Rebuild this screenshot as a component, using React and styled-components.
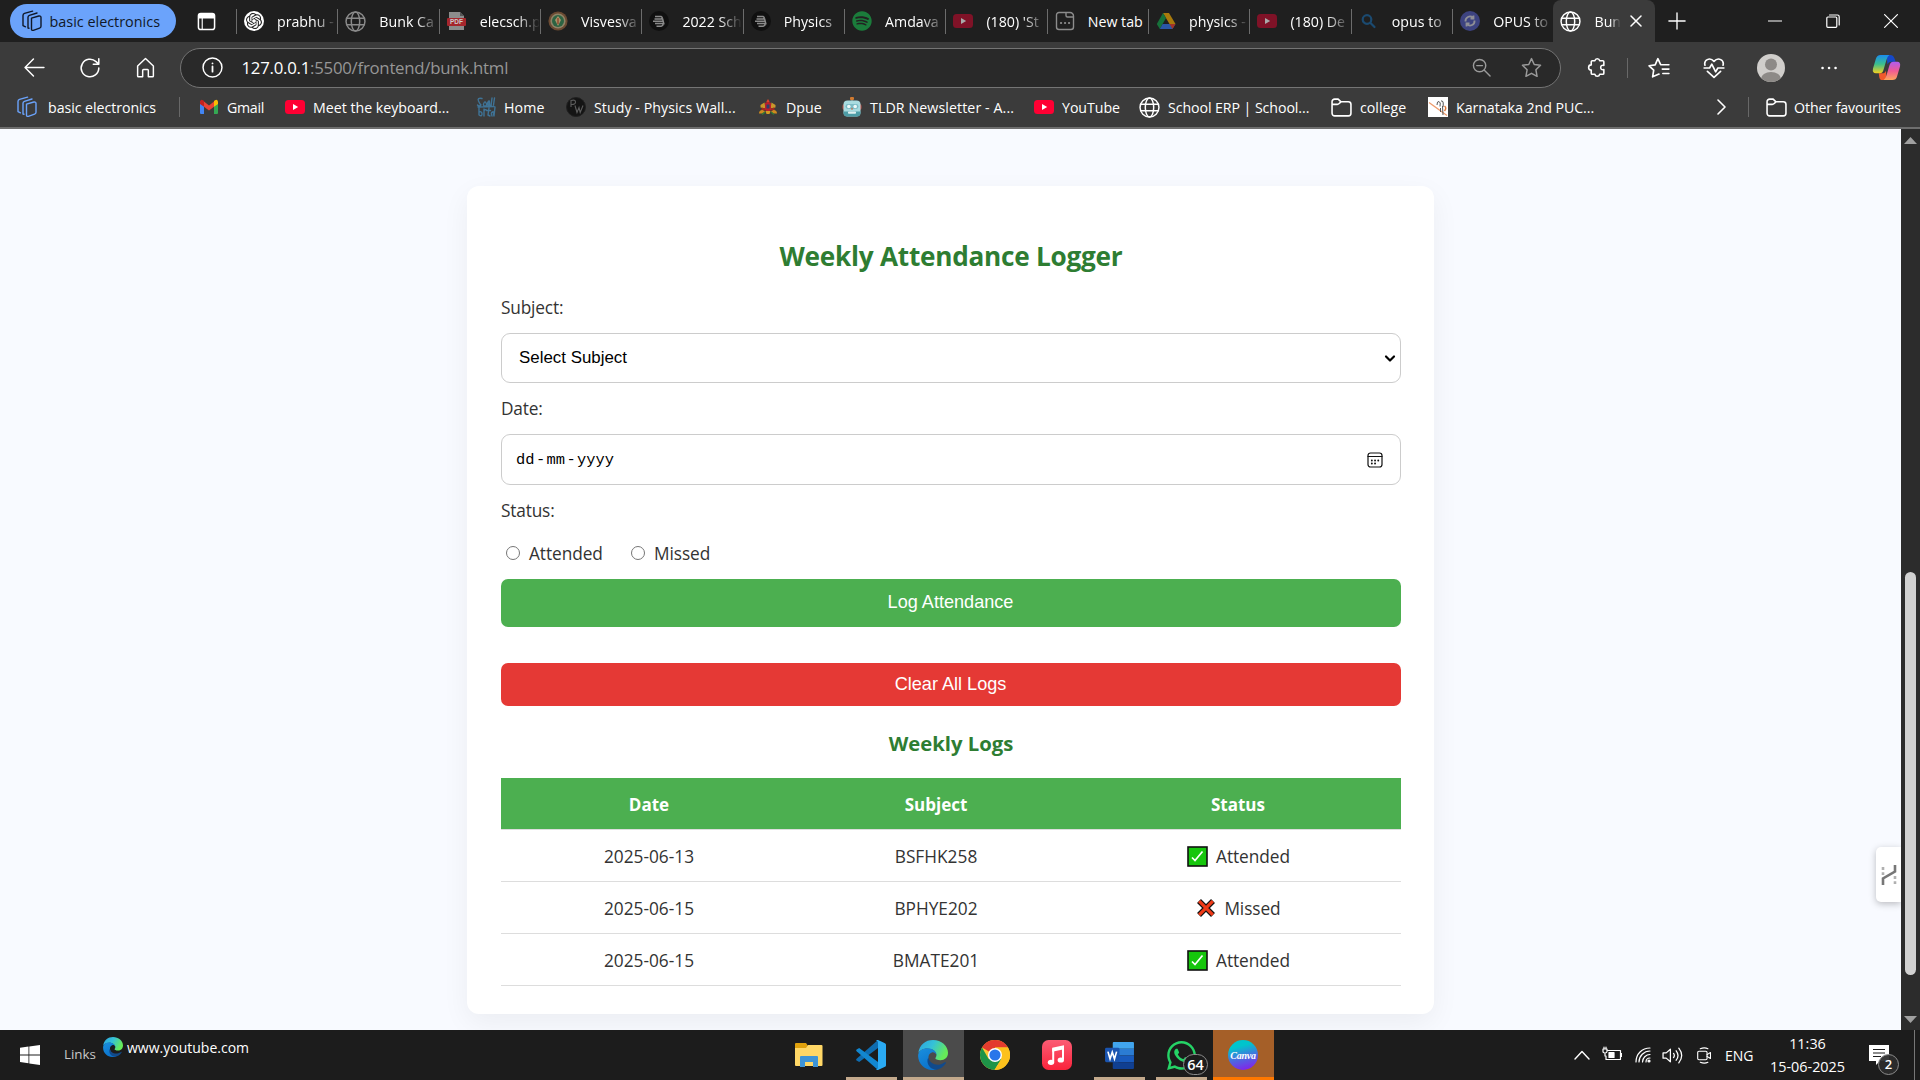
import React from "react";
import styled, { createGlobalStyle, css } from "styled-components";
import { FaSpotify, FaWhatsapp } from "react-icons/fa";
import { SiOpenai } from "react-icons/si";

const ui = `"Open Sans", "Noto Sans", sans-serif`;
const arial = `"Liberation Sans", Arial, sans-serif`;

const Global = createGlobalStyle`
  *, *::before, *::after { box-sizing: border-box; }
  body { margin: 0; overflow: hidden; background: #1c1c1c; font-family: ${ui}; }
  svg { display: block; flex: none; }
`;

const Screen = styled.div`
  width: 1920px;
  height: 1080px;
  display: flex;
  flex-direction: column;
  overflow: hidden;
`;

/* ---------- icons ---------- */
const Line = ({ s = 20, w = 1.5, c = "#fff", children, vb = "0 0 20 20", h }) => (
  <svg width={s} height={h || s} viewBox={vb} fill="none" stroke={c} strokeWidth={w} strokeLinecap="round" strokeLinejoin="round">
    {children}
  </svg>
);
const Globe = ({ c = "#fff" }) => (
  <Line s={21} c={c} w={1.4}>
    <circle cx="10" cy="10" r="9" />
    <ellipse cx="10" cy="10" rx="4" ry="9" />
    <path d="M1.8 7h16.4M1.8 13h16.4" />
  </Line>
);
const Pages = ({ c }) => (
  <Line s={22} c={c} w={1.4} vb="0 0 22 22">
    <path d="M10.5 8.2 17.8 6q2.2-.4 2.2 1.6v8.6q0 1.4-1.4 1.9l-6.3 2.2q-1.8.5-1.8-1.4z" />
    <path d="M8 18.2 7 18V7.3q0-1.5 1.4-2L16 3" />
    <path d="M4.5 16.8 2 15.6V5.6Q2 4 3.5 3.4L11.6 1.1" />
  </Line>
);
const YouTube = ({ dim }) => (
  <svg width="20" height="20" viewBox="0 0 20 20">
    <rect y="3" width="20" height="14" rx="3.5" fill={dim ? "#7f1227" : "#ff0033"} />
    <path d="m8 7 5.2 3L8 13z" fill={dim ? "#aaa" : "#fff"} />
  </svg>
);
const PdfIcon = () => (
  <svg width="20" height="20" viewBox="0 0 20 20">
    <path d="M2 1h11l4 4v14H2z" fill="#8c8c8c" />
    <path d="M13 1v4h4z" fill="#555" />
    <rect x="0" y="7" width="19" height="8" rx="1" fill="#a5262c" />
    <text x="9.5" y="13.4" fontSize="6.5" fontWeight="700" fill="#ccc" textAnchor="middle" fontFamily="Liberation Sans, sans-serif">PDF</text>
  </svg>
);
const Crest = () => (
  <svg width="20" height="20" viewBox="0 0 20 20">
    <circle cx="10" cy="10" r="9.6" fill="#6b4a32" />
    <circle cx="10" cy="10" r="7.6" fill="#8e8367" />
    <circle cx="10" cy="10" r="6" fill="#2c6342" />
    <path d="M10 5 13 9 10 15 7 9z" fill="#a8946a" />
    <path d="M10 7v6" stroke="#8a3a22" strokeWidth="1.2" />
  </svg>
);
const Bold3 = () => (
  <svg width="20" height="20" viewBox="0 0 20 20">
    <circle cx="10" cy="10" r="10" fill="#101010" />
    <path d="M6 5.5h6q2.5 1.2 0 2.6H5.5M4 10.300h9.500M6 12.500h7.500q1.500 2-1.500 2.800H7.500M13.500 7.500l1.500 6" stroke="#8a8a8a" strokeWidth="1.5" fill="none" />
  </svg>
);
const Disc = styled.span`
  display: grid;
  place-items: center;
  flex: none;
  width: 20px;
  height: 20px;
  border-radius: 50%;
  background: ${(p) => p.$bg};
  color: ${(p) => p.$fg};
  font-size: ${(p) => p.$size || 16}px;
`;
const NewTabIcon = () => (
  <Line c="#8c8c8c" w={1.4}>
    <path d="M11 1.5H4A2.5 2.5 0 0 0 1.5 4v12A2.5 2.5 0 0 0 4 18.5h12a2.5 2.5 0 0 0 2.5-2.5V6H12.500a1.500 1.500 0 0 1-1.500-1.500zM11 1.500h4a3.500 3.500 0 0 1 3.500 3.500v1" />
    <path d="M6 12h.1M10 12h.1M14 12h.1" strokeWidth="2.2" />
  </Line>
);
const Drive = () => (
  <svg width="20" height="20" viewBox="0 0 20 20">
    <path d="M7 2h6l6.500 11h-6z" fill="#a87a0c" />
    <path d="M7 2 .8 13l3 5 6.200-11z" fill="#16713a" />
    <path d="M6.600 13h12.900l-3 5H3.800z" fill="#2a57a5" />
    <path d="M13.500 13h6l-3 5z" fill="#a23227" />
  </svg>
);
const Gmail = () => (
  <svg width="20" height="20" viewBox="0 0 20 20">
    <path d="M1 4.500h4V17H2q-1 0-1-1z" fill="#4285f4" />
    <path d="M15 4.500h4V16q0 1-1 1h-3z" fill="#34a853" />
    <path d="M5 4.500 10 8.500l5-4v5.300L10 13.500 5 9.800z" fill="#ea4335" />
    <path d="M1 4.800Q1.500 2 4 3.200L5 4v5.800L1 7z" fill="#c5221f" />
    <path d="M19 4.800Q18.500 2 16 3.200L15 4v5.800L19 7z" fill="#fbbc04" />
  </svg>
);
const HomeScribble = () => (
  <Line c="#3f7396" w={1.4}>
    <path d="M6 1.500Q1 .5 2.500 4T5 8q-2 2-3.500 0M8.500 5q-2.500 4 .5 4t.5-4M12.500 4q-2.500 4 0 4.500l.8-4.500.5 5M16 1l-1 8M18.500 1l-1 7M3 11v7q3 2 3-1t-3-2M8 12v7M8 14q1-2 2.500-1M13 11l-1 7 2 1M10.500 13.500h4M16 19q-1.500-3 .5-4t1 3M19 10l-1 9M2 10l16-.5" />
  </Line>
);
const Pw = () => (
  <svg width="20" height="20" viewBox="0 0 20 20">
    <circle cx="10" cy="10" r="9.500" fill="#141414" stroke="#202020" />
    <path d="M5 10V3.500q4.500-1.200 4.500 1.500T5 7.500M9 8.500l2 7 2-5 1.200 5 2.800-7" stroke="#5e5e5e" strokeWidth="1.1" fill="none" />
  </svg>
);
const Emblem = () => (
  <svg width="20" height="20" viewBox="0 0 20 20">
    <path d="M10 2l1.600 2.500L10 6 8.400 4.500z" fill="#d8432c" />
    <path d="M2.500 8l4-2.500 1 6-5-1zM17.500 8l-4-2.500-1 6 5-1z" fill="#c9972a" />
    <path d="M7 6q3-2 6 0v7l-3 2-3-2z" fill="#b9202c" />
    <path d="M8.500 7.500h3v4h-3z" fill="#2c3f6e" />
    <path d="M4 10.500l3 1v2H3zM16 10.500l-3 1v2h4z" fill="#a32a20" />
    <path d="M1 16.500q0-3.500 3.500-3.500l2.500 1.500-2 2zM19 16.500q0-3.500-3.500-3.500L13 14.500l2 2z" fill="#cf8a1e" />
    <path d="M4 17.500l3-2.500M16 17.500l-3-2.500" stroke="#2f7a34" strokeWidth="1.500" />
    <path d="M7.500 14h5l-1 3h-3z" fill="#d19b22" />
  </svg>
);
const Robot = () => (
  <svg width="20" height="20" viewBox="0 0 20 20">
    <rect x="8" y="0" width="4" height="3" rx="1" fill="#d07a30" />
    <path d="M10 3v2" stroke="#a98" />
    <rect x="0.500" y="7" width="19" height="6" rx="2" fill="#c25148" />
    <rect x="1.500" y="3.500" width="17" height="16" rx="4" fill="#a9dbe0" />
    <path d="M1.500 14.500h17v1q0 4-4 4h-9q-4 0-4-4z" fill="#4d9ca6" />
    <rect x="3.500" y="7" width="13" height="5" rx="2.400" fill="#7dbcc6" />
    <circle cx="6.800" cy="9.500" r="1.800" fill="#eef8f8" />
    <circle cx="13.200" cy="9.500" r="1.800" fill="#eef8f8" />
    <path d="M10 10.500l1 2H9z" fill="#d3572b" />
    <rect x="6" y="14.500" width="8" height="2.200" rx=".8" fill="#dff0f1" />
  </svg>
);
const Folder = () => (
  <Line s={21} w={1.5}>
    <path d="M1 15.500V4.500A2.500 2.500 0 0 1 3.500 2h3.300l2.700 2.600h7A2.500 2.500 0 0 1 19 7v8.500a2.500 2.500 0 0 1-2.500 2.500h-13A2.500 2.500 0 0 1 1 15.500zM1 7h5q1 0 1.800-.8L9.500 4.600" />
  </Line>
);
const Heron = () => (
  <svg width="20" height="20" viewBox="0 0 20 20">
    <rect width="20" height="20" fill="#fff" />
    <path d="M1 5.500l18 13" stroke="#ee9a6a" strokeWidth="1.300" />
    <path d="M9 8q0-4 2-3.500t1 5M13 4q3-1 2 6M14.500 9l.5 9M12.500 11v4" stroke="#555" fill="none" />
    <path d="M16.500 9q2.500 2 0 5" stroke="#e07a3c" strokeWidth="1.500" fill="none" />
  </svg>
);
const EdgeLogo = ({ s, id }) => (
  <svg width={s} height={s} viewBox="0 0 32 32">
    <defs>
      <linearGradient id={id + "a"} x1="0" y1="0" x2="1" y2=".4">
        <stop offset="0" stopColor="#2ba3e0" />
        <stop offset=".5" stopColor="#35c1d8" />
        <stop offset="1" stopColor="#66eb58" />
      </linearGradient>
      <linearGradient id={id + "b"} x1="0" y1="0" x2=".5" y2="1">
        <stop offset="0" stopColor="#1a8fdd" />
        <stop offset="1" stopColor="#0a72cc" />
      </linearGradient>
    </defs>
    <path d="M.3 14C1.500 5 8 0 16 0c9 0 16 6.500 16 13.500 0 5-3.500 8-8 8-3.500 0-5.500-1-5.500-2 0-.8 1.200-1.300 1.200-3.600C19.700 12 15 9 10 9 5 9 1.500 11.500.3 14z" fill={`url(#${id}a)`} />
    <path d="M.1 17C0 11.500 5 8.600 10 8.700c5.500.1 9.700 3.400 9.700 7.200-1-2.400-3-3.400-5-2.700-3 1-4 4-3.400 7.300 1 6 6 9.500 11 9.300-3 2-5.500 2.200-7.500 2.200C7 31.500.3 25.500.1 17z" fill={`url(#${id}b)`} />
    <path d="M11.200 19c.8 5 6 8 11.300 7.300 3-.4 5-1.800 6.200-2.500 1-.5 1.500.2 1 1-2.500 4-6.500 6.300-10 6.900-6-.2-10.500-5-9.500-11.200.2-.6.500-1.100 1-1.500z" fill="#114a8b" />
  </svg>
);
const Copilot = () => (
  <svg width="29" height="27" viewBox="0 0 30 28">
    <defs>
      <linearGradient id="cpa" x1="0" y1="0" x2="0" y2="1">
        <stop offset="0" stopColor="#1a8df0" />
        <stop offset=".5" stopColor="#3bbf8d" />
        <stop offset="1" stopColor="#f5d020" />
      </linearGradient>
      <linearGradient id="cpb" x1="0" y1="0" x2="0" y2="1">
        <stop offset="0" stopColor="#b05cf0" />
        <stop offset=".5" stopColor="#ef5a94" />
        <stop offset="1" stopColor="#fda55c" />
      </linearGradient>
    </defs>
    <path d="M15 1h4q3 0 4 3l1.500 4H20q-3 0-4 3z" fill="#1548c8" />
    <path d="M15 27h-4q-3 0-3.500-3L7 20h3.500q3 0 4-3z" fill="#f0592c" />
    <path d="M9 1h9q-2 1-3 5l-3 10q-1 4-4 4H4q-4 0-3-5L4 5q1-4 5-4z" fill="url(#cpa)" />
    <path d="M21 27h-9q2-1 3-5l3-10q1-4 4-4h4q4 0 3 5l-3 10q-1 4-5 4z" fill="url(#cpb)" />
  </svg>
);

/* ---------- tab strip ---------- */
const TabStrip = styled.header`
  flex: none;
  display: flex;
  align-items: center;
  height: 42px;
  background: #1f1f1f;
  color: #fff;
  font-size: 14.2px;
`;
const GroupPill = styled.div`
  display: flex;
  align-items: center;
  gap: 6.5px;
  width: 166px;
  height: 34px;
  margin-left: 10px;
  padding-left: 11px;
  border-radius: 17px;
  background: #6ba3fb;
  color: #101828;
  font-size: 14.4px;
  white-space: nowrap;
`;
const TabActions = styled.div`
  width: 60px;
  padding-left: 21px;
`;
const Tab = styled.div`
  display: flex;
  align-items: center;
  width: 101.35px;
  height: 25px;
  padding-left: 7px;
  border-left: 1px solid #6c6c6c;
`;
const ActiveTab = styled(Tab)`
  align-self: stretch;
  width: 102px;
  height: auto;
  border-left: 0;
  border-radius: 8px 8px 0 0;
  background: #3b3b3b;
`;
const TabTitle = styled.span`
  width: ${(p) => p.$w || 59}px;
  margin-left: 13px;
  white-space: nowrap;
  ${(p) => !p.$solid && css`mask-image: linear-gradient(90deg, #000 62%, transparent 102%);`}
`;
const CloseSlot = styled.span`
  margin-left: 10px;
`;
const PlusSlot = styled.span`
  margin-left: 13px;
`;
const WindowControls = styled.div`
  display: flex;
  gap: 44px;
  margin: 0 22px 0 auto;
`;

/* ---------- toolbar ---------- */
const Toolbar = styled.div`
  flex: none;
  display: flex;
  align-items: center;
  height: 49px;
  padding: 3px 19px 0 24px;
  background: #3b3b3b;
`;
const NavButtons = styled.div`
  display: flex;
  align-items: center;
  gap: 34px;
  width: 156px;
  height: 40px;
  padding-bottom: 1px;
`;
const AddressBar = styled.div`
  display: flex;
  align-items: center;
  width: 1381px;
  height: 40px;
  padding: 0 18px 1px 20.5px;
  border: 1px solid #747474;
  border-radius: 20px;
  background: #292929;
`;
const Url = styled.span`
  margin-left: 19px;
  flex: 1;
  color: #969696;
  font-size: 16.8px;
  letter-spacing: -0.25px;
`;
const Host = styled.span`
  color: #fff;
`;
const ToolIcons = styled.div`
  flex: 1;
  display: flex;
  align-items: center;
  height: 40px;
  padding: 0 0 1px 25px;
`;
const Gap = styled.span`
  width: ${(p) => p.$w}px;
`;
const Divider = styled.span`
  flex: none;
  width: 1px;
  height: 20px;
  background: #686868;
`;

/* ---------- bookmarks ---------- */
const Bookmarks = styled.nav`
  flex: none;
  display: flex;
  align-items: center;
  height: 38px;
  padding: 0 0 4px 16px;
  border-bottom: 2px solid #6e6e6e;
  background: #3b3b3b;
  color: #fff;
  font-size: 14.2px;
`;
const Bookmark = styled.div`
  display: flex;
  align-items: center;
  gap: ${(p) => p.$gap || 8}px;
  width: ${(p) => p.$w}px;
  letter-spacing: ${(p) => p.$ls || 0}px;
  white-space: nowrap;
`;

/* ---------- page ---------- */
const Viewport = styled.div`
  flex: none;
  display: flex;
  height: 901px;
  background: #f8faff;
`;
const Page = styled.main`
  position: relative;
  width: 1901px;
  padding: 57px 0 0 467px;
  overflow: hidden;
`;
const Card = styled.section`
  width: 967px;
  height: 828px;
  padding: 49px 33px 0 34px;
  border-radius: 12px;
  background: #fff;
  box-shadow: 0 9px 28px rgba(0, 0, 0, 0.055);
  color: #333;
  font-size: 17.3px;
`;
const Title = styled.h2`
  margin: 0;
  height: 43px;
  line-height: 43px;
  text-align: center;
  color: #2e7d32;
  font-size: 26.2px;
  font-weight: 700;
  letter-spacing: -0.25px;
`;
const FieldLabel = styled.div`
  height: 28px;
  margin-top: ${(p) => p.$mt}px;
  line-height: 30px;
  letter-spacing: -0.18px;
`;
const Field = styled.div`
  display: flex;
  align-items: center;
  justify-content: space-between;
  height: ${(p) => p.$h}px;
  margin-top: 12px;
  padding: ${(p) => p.$pad};
  border: 1px solid #ccc;
  border-radius: 9px;
  color: #000;
  font: 16.9px ${arial};
`;
const DateText = styled.span`
  display: flex;
  gap: 1.4px;
  font: 15.4px "Liberation Mono", monospace;
`;
const Radios = styled.div`
  display: flex;
  align-items: center;
  height: 30px;
  margin-top: 14px;
  padding-left: 5px;
  letter-spacing: -0.08px;
`;
const Radio = styled.span`
  width: 14px;
  height: 14px;
  margin-right: 9px;
  border: 1.3px solid #767676;
  border-radius: 50%;
`;
const RadioText = styled.span`
  width: ${(p) => p.$w}px;
`;
const Action = styled.button`
  display: block;
  width: 900px;
  height: ${(p) => p.$h}px;
  margin-top: ${(p) => p.$mt}px;
  padding: 0 1px ${(p) => p.$pb}px 0;
  border: 0;
  border-radius: 7px;
  background: ${(p) => p.$bg};
  color: #fff;
  font: 18.1px ${arial};
`;
const SubTitle = styled.h3`
  margin: 23px 0 0;
  height: 49px;
  line-height: 28px;
  text-align: center;
  color: #2e7d32;
  font-size: 20.3px;
`;
const Table = styled.table`
  width: 900px;
  table-layout: fixed;
  border-collapse: collapse;
`;
const Th = styled.th`
  width: ${(p) => p.$w}px;
  height: 51px;
  padding: 2px 0 0;
  background: #4caf50;
  border-bottom: 1px solid #ddd;
  color: #fff;
  font-size: 17px;
`;
const Td = styled.td`
  height: 52px;
  padding: 2px 0 0;
  border-bottom: 1px solid #ddd;
  text-align: center;
`;
const StatusCell = styled.span`
  display: inline-flex;
  align-items: center;
  gap: 8px;
  padding-left: 1px;
  vertical-align: top;
  letter-spacing: -0.08px;
`;
const SideWidget = styled.div`
  position: absolute;
  right: 0;
  top: 718px;
  display: grid;
  place-items: center;
  width: 25px;
  height: 55px;
  border-radius: 5px 0 0 5px;
  background: #fff;
  box-shadow: 0 2px 7px rgba(0, 0, 0, 0.25);
`;
const Scrollbar = styled.aside`
  display: flex;
  flex-direction: column;
  align-items: center;
  width: 19px;
  padding: 8px 0 7px;
  background: #2c2c2c;
`;
const Thumb = styled.div`
  width: 11px;
  height: 403px;
  margin: 428px 0 auto;
  border-radius: 6px;
  background: #d1d1d1;
`;

/* ---------- taskbar ---------- */
const Taskbar = styled.footer`
  flex: none;
  display: flex;
  height: 50px;
  background: #1c1c1c;
  color: #fff;
`;
const TaskLeft = styled.div`
  display: flex;
  width: 779px;
  padding: 15px 0 0 20px;
`;
const LinksLabel = styled.span`
  width: 39px;
  margin-left: 24px;
  color: #c8c8c8;
  font-size: 13.4px;
  line-height: 19px;
`;
const LinkItem = styled.span`
  display: flex;
  align-items: center;
  gap: 4px;
  height: 20px;
  margin-top: -8px;
  font-size: 14px;
`;
const TaskApp = styled.div`
  position: relative;
  display: grid;
  place-items: center;
  width: 62px;
  height: 50px;
  padding-right: 1px;
  border-right: 1px solid #1c1c1c;
  background: ${(p) => p.$bg || "transparent"};
  &::after {
    content: "";
    position: absolute;
    bottom: 0;
    left: ${(p) => (p.$bg ? 0 : 5)}px;
    right: ${(p) => (p.$bg ? 0 : 5)}px;
    height: 3px;
    background: ${(p) => p.$line || "transparent"};
  }
`;
const CountBadge = styled.span`
  position: absolute;
  left: 32px;
  top: 24px;
  width: 25px;
  height: 21px;
  border: 1px solid #8a8a8a;
  border-radius: 11px;
  background: #1c1c1c;
  text-align: center;
  font-size: 14.5px;
  font-weight: 600;
  line-height: 19px;
`;
const CanvaDisc = styled.span`
  display: grid;
  place-items: center;
  width: 30px;
  height: 30px;
  border-radius: 50%;
  background: linear-gradient(165deg, #00c4cc 25%, #4b6be0 58%, #7d2ae8 88%);
  font: italic 700 10px "Liberation Serif", serif;
  letter-spacing: -0.2px;
`;
const Tray = styled.div`
  display: flex;
  align-items: center;
  margin-left: auto;
  width: 346px;
  font-size: 14px;
`;
const TrayIcon = styled.span`
  width: ${(p) => p.$w}px;
`;
const Clock = styled.div`
  width: 77px;
  text-align: center;
  white-space: nowrap;
  line-height: 23px;
  font-size: 14.4px;
`;
const Notice = styled.div`
  position: relative;
  width: 45px;
  height: 20px;
  margin-left: 23px;
`;
const NoticeCount = styled.span`
  position: absolute;
  left: 9px;
  top: 9px;
  width: 21px;
  height: 21px;
  border: 1px solid #8c8c8c;
  border-radius: 50%;
  background: rgba(45, 45, 45, 0.94);
  text-align: center;
  font-size: 13px;
  font-weight: 600;
  line-height: 19px;
`;
const ShowDesktop = styled.span`
  align-self: stretch;
  width: 1px;
  background: #777;
`;

const tabs = [
  ["prabhu -", <Disc $bg="#fff" $fg="#222"><SiOpenai /></Disc>],
  ["Bunk Ca", <Globe c="#8a8a8a" />],
  ["elecsch.p", <PdfIcon />],
  ["Visvesva", <Crest />],
  ["2022 Sch", <Bold3 />],
  ["Physics", <Bold3 />],
  ["Amdava", <Disc $bg="#222" $fg="#1b7c3b" $size={20}><FaSpotify /></Disc>],
  ["(180) 'St", <YouTube dim />],
  ["New tab", <NewTabIcon />, true],
  ["physics -", <Drive />],
  ["(180) De", <YouTube dim />],
  ["opus to", <Line c="#1b4a70" w={2.2}><circle cx="8" cy="8.500" r="4.300" /><path d="m11.500 12 4 4" /></Line>],
  ["OPUS to", <svg width="20" height="20" viewBox="0 0 20 20"><circle cx="10" cy="10" r="10" fill="#3d4380" /><path d="M5.500 10.500a4.500 4.500 0 0 1 7.500-3.800M14.500 9.500a4.500 4.500 0 0 1-7.500 3.800M13.500 4.500v3h-3M6.500 15.500v-3h3" fill="none" stroke="#8f8f96" strokeWidth="1.800" /></svg>],
];

const marks = [
  ["Gmail", 86, <Gmail />, -0.3],
  ["Meet the keyboard...", 191, <YouTube />],
  ["Home", 90, <HomeScribble />, 0.15],
  ["Study - Physics Wall...", 192, <Pw />, 0.05],
  ["Dpue", 84, <Emblem />],
  ["TLDR Newsletter - A...", 192, <Robot />, 0.1],
  ["YouTube", 105, <YouTube />, -0.05],
  ["School ERP | School...", 192, <Globe />, -0.08],
  ["college", 97, <Folder />],
  ["Karnataka 2nd PUC...", 286, <Heron />, -0.05],
];

const Check = () => (
  <svg width="21" height="21" viewBox="0 0 21 21">
    <rect x="1" y="1" width="19" height="19" fill="#16c60c" stroke="#111" strokeWidth="1.6" />
    <path d="m5 11.500 3 3 7.500-9" fill="none" stroke="#fff" strokeWidth="1.7" />
  </svg>
);
const Cross = () => (
  <svg width="20" height="20" viewBox="0 0 20 20">
    <path d="m3 3 14 14M17 3 3 17" stroke="#111" strokeWidth="5.600" />
    <path d="m3.200 3.200 13.600 13.600M16.800 3.200 3.200 16.800" stroke="#f03a17" strokeWidth="3.200" />
  </svg>
);

const logs = [
  ["2025-06-13", "BSFHK258", true],
  ["2025-06-15", "BPHYE202", false],
  ["2025-06-15", "BMATE201", true],
];

export default function App() {
  return (
    <Screen>
      <Global />
      <TabStrip>
        <GroupPill><Pages c="#101828" />basic electronics</GroupPill>
        <TabActions>
          <Line s={19} w={1.6}>
            <rect x="1.500" y="1.500" width="17" height="17" rx="2.500" />
            <path d="M2 3h16v3H2z" fill="#fff" />
            <path d="M5.500 6v12" strokeWidth="1.2" />
          </Line>
        </TabActions>
        {tabs.map(([t, icon, solid], i) => (
          <Tab key={i}>{icon}<TabTitle $solid={solid}>{t}</TabTitle></Tab>
        ))}
        <ActiveTab>
          <Globe />
          <TabTitle $w={26}>Bun</TabTitle>
          <CloseSlot><Line s={12} vb="0 0 12 12" w={1.5}><path d="m1 1 10 10M11 1 1 11" /></Line></CloseSlot>
        </ActiveTab>
        <PlusSlot><Line s={18} w={1.5}><path d="M10 1v18M1 10h18" /></Line></PlusSlot>
        <WindowControls>
          <Line s={14} vb="0 0 14 14" w={1.2}><path d="M.5 7h13" /></Line>
          <Line s={14} vb="0 0 14 14" w={1.2}><rect x=".8" y="3" width="10" height="10.300" rx="1" /><path d="M3.500 1h8q1.700 0 1.700 1.700V11" /></Line>
          <Line s={14} vb="0 0 14 14" w={1.2}><path d="m.6.6 12.800 12.800M13.400.6.6 13.400" /></Line>
        </WindowControls>
      </TabStrip>

      <Toolbar>
        <NavButtons>
          <Line s={21} w={1.4}><path d="M19 10H1.500M9 2l-8 8 8 8" /></Line>
          <Line s={22} w={1.4}><path d="M18 10a8 8 0 1 1-2.500-5.800L18 6.500M18 1.500v5h-5" /></Line>
          <Line s={21} w={1.4}><path d="M2.500 8.500 10 1.500l7.500 7V18q0 .8-.8.800h-4v-6q0-.8-.8-.8H8.100q-.8 0-.8.800v6h-4q-.8 0-.8-.8z" /></Line>
        </NavButtons>
        <AddressBar>
          <Line s={21} w={1.4}><circle cx="10" cy="10" r="9" /><path d="M10 9v5M10 6v.1" strokeWidth="1.7" /></Line>
          <Url><Host>127.0.0.1</Host>:5500/frontend/bunk.html</Url>
          <Line s={19} c="#9a9a9a" w={1.5}><circle cx="8" cy="8" r="6.500" /><path d="m13 13 6 6M5 8h6" /></Line>
          <Gap $w={30} />
          <Line s={21} c="#9a9a9a" w={1.4}><path d="m10 1.500 2.600 5.600 6 .8-4.400 4.300 1.100 6.200L10 15.500l-5.300 2.900 1.100-6.200L1.400 7.900l6-.8z" /></Line>
        </AddressBar>
        <ToolIcons>
          <Line s={21} w={1.5}><path d="M6 3.500h2.500a2.300 2.300 0 0 1 4.500 0h3q1 0 1 1V8q-3-.6-3 2t3 2v3.500q0 1-1 1h-3a2.300 2.300 0 0 1-4.500 0H6q-1 0-1-1v-3a2.500 2.500 0 0 1 0-5v-3q0-1 1-1z" /></Line>
          <Gap $w={20} /><Divider /><Gap $w={20} />
          <Line s={22} w={1.5}><path d="M10 15.500 4.200 18l1-6L1 8l5.500-.8L9 1.500l2.500 5.500H19M13 11h6M13.500 15h5.500" /></Line>
          <Gap $w={33} />
          <Line s={22} w={1.5}><path d="M1.800 7.500C.5 3 6-.5 10 4c4-4.500 9.500-1 8.200 3.500M1 10h5l2-3.500 3.500 7L13.500 10H19M4 13l6 5.500 6-5.500" /></Line>
          <Gap $w={32} />
          <svg width="28" height="28" viewBox="0 0 28 28">
            <clipPath id="av"><circle cx="14" cy="14" r="14" /></clipPath>
            <g clipPath="url(#av)"><rect width="28" height="28" fill="#d0cecb" /><circle cx="14" cy="10.500" r="6" fill="#8d8a87" /><ellipse cx="14" cy="25" rx="10" ry="7" fill="#8d8a87" /></g>
          </svg>
          <Gap $w={34} />
          <Line s={20} w={2.5}><path d="M3.500 10h.1M10 10h.1M16.500 10h.1" /></Line>
          <Gap $w={33} />
          <Copilot />
        </ToolIcons>
      </Toolbar>

      <Bookmarks>
        <Bookmark $w={163} $gap={10} $ls={-0.05}><Pages c="#6ba3fb" />basic electronics</Bookmark>
        <Divider />
        <Gap $w={19} />
        {marks.map(([t, w, icon, ls]) => <Bookmark key={t} $w={w} $ls={ls}>{icon}{t}</Bookmark>)}
        <Line s={16} vb="0 0 16 16" w={1.6}><path d="m4 1 7 7-7 7" /></Line>
        <Gap $w={18} />
        <Divider />
        <Gap $w={17} />
        <Bookmark $w={140} $gap={7} $ls={-0.1}><Folder />Other favourites</Bookmark>
      </Bookmarks>

      <Viewport>
        <Page>
          <Card>
            <Title>Weekly Attendance Logger</Title>
            <FieldLabel $mt={15}>Subject:</FieldLabel>
            <Field $h={50} $pad="0 4px 0 17px">
              Select Subject
              <Line s={12} vb="0 0 12 12" c="#000" w={2.2}><path d="m2 4.500 4 4 4-4" /></Line>
            </Field>
            <FieldLabel $mt={11}>Date:</FieldLabel>
            <Field $h={51} $pad="0 17px 0 14px">
              <DateText><span>dd</span><span>-</span><span>mm</span><span>-</span><span>yyyy</span></DateText>
              <Line s={16} vb="0 0 16 16" c="#111" w={1.2}>
                <rect x="1" y="1" width="14" height="14" rx="2.500" />
                <path d="M1 4.500h14" />
                <path d="M4.800 8.500h.1M8 8.500h.1M11.200 8.500h.1M4.800 11.500h.1M8 11.500h.1" strokeWidth="1.800" />
              </Line>
            </Field>
            <FieldLabel $mt={11}>Status:</FieldLabel>
            <Radios>
              <Radio /><RadioText $w={102}>Attended</RadioText>
              <Radio /><RadioText $w={80}>Missed</RadioText>
            </Radios>
            <Action $h={48} $mt={11} $pb={2} $bg="#4caf50">Log Attendance</Action>
            <Action $h={43} $mt={36} $pb={0} $bg="#e53935">Clear All Logs</Action>
            <SubTitle>Weekly Logs</SubTitle>
            <Table>
              <thead>
                <tr><Th $w={296}>Date</Th><Th $w={278}>Subject</Th><Th $w={326}>Status</Th></tr>
              </thead>
              <tbody>
                {logs.map(([d, s, ok]) => (
                  <tr key={s}>
                    <Td>{d}</Td>
                    <Td>{s}</Td>
                    <Td><StatusCell>{ok ? <Check /> : <Cross />}{ok ? "Attended" : "Missed"}</StatusCell></Td>
                  </tr>
                ))}
              </tbody>
            </Table>
          </Card>
          <SideWidget>
            <svg width="16" height="20" viewBox="0 0 16 20" fill="none" strokeWidth="2.6">
              <path d="M2 20v-6.500l12-7V0" stroke="#777" />
              <path d="M2 2v8M14 11v8" strokeDasharray="3 2.200" stroke="#b0b0b0" />
            </svg>
          </SideWidget>
        </Page>
        <Scrollbar>
          <svg width="13" height="7" viewBox="0 0 13 7"><path d="M0 7h13L6.500 0z" fill="#a0a0a0" /></svg>
          <Thumb />
          <svg width="13" height="7" viewBox="0 0 13 7"><path d="M0 0h13L6.500 7z" fill="#a0a0a0" /></svg>
        </Scrollbar>
      </Viewport>

      <Taskbar>
        <TaskLeft>
          <svg width="20" height="20" viewBox="0 0 20 20"><path d="M0 2.800 8.500 1.600v7.900H0zM9.300 1.500 20 0v9.500H9.300zM0 10.400h8.500v7.900L0 17.100zM9.300 10.400H20V20L9.300 18.400z" fill="#fff" /></svg>
          <LinksLabel>Links</LinksLabel>
          <LinkItem><EdgeLogo s={20} id="e1" />www.youtube.com</LinkItem>
        </TaskLeft>
        <TaskApp>
          <svg width="28" height="26" viewBox="0 0 28 26">
            <path d="M0 2q0-1 1-1h10l2 3v4H0z" fill="#e0a10c" />
            <path d="M0 6h11l2-3h13.500q1 0 1 1v19q0 1-1 1H1q-1 0-1-1z" fill="#ffd766" />
            <path d="M5 25V15q0-1 1-1h16q1 0 1 1v10h-5v-5h-8v5z" fill="#3e94d6" />
          </svg>
        </TaskApp>
        <TaskApp $line="#c3a98c">
          <svg width="30" height="30" viewBox="0 0 30 30">
            <path d="M22 0v8L3.200 22 .6 20.600q-1-.8 0-1.800z" fill="#0e6cb0" />
            <path d="M22 30v-8L3.200 8 .6 9.400q-1 .8 0 1.800z" fill="#1287d0" />
            <path d="M22 0l7 3.200q1 .5 1 1.500v20.600q0 1-1 1.500L22 30q-1.500.2-2-.8 2 .4 2-1.600V2.400Q22 .4 20 .8q.5-1 2-.8z" fill="#2aaaf3" />
          </svg>
        </TaskApp>
        <TaskApp $bg="#4b4b4b" $line="#c3a98c"><EdgeLogo s={30} id="e2" /></TaskApp>
        <TaskApp>
          <svg width="30" height="30" viewBox="0 0 30 30">
            <circle cx="15" cy="15" r="15" fill="#fcc934" />
            <path d="M15 15 2 7.500A15 15 0 0 1 28 7.500H15z" fill="#e33b2e" />
            <path d="M2 7.500A15 15 0 0 0 14.500 30l7-11.300L8.500 18.700z" fill="#1e9448" />
            <path d="M15 7.500h13a15 15 0 0 1-13.500 22.500l7-11.300z" fill="#fcc11c" />
            <circle cx="15" cy="15" r="7" fill="#fff" />
            <circle cx="15" cy="15" r="5.600" fill="#2a76ea" />
          </svg>
        </TaskApp>
        <TaskApp>
          <svg width="30" height="30" viewBox="0 0 30 30">
            <defs><linearGradient id="mu" x1="0" y1="0" x2="0" y2="1"><stop offset="0" stopColor="#fb5c74" /><stop offset="1" stopColor="#fa233b" /></linearGradient></defs>
            <rect width="30" height="30" rx="6.500" fill="url(#mu)" />
            <path d="M11.200 8.500V22M21 6.300V19.500" stroke="#fff" strokeWidth="2" fill="none" />
            <path d="M10.200 7.800 22 5.200v4L10.200 11.800z" fill="#fff" />
            <ellipse cx="9" cy="22.300" rx="3.200" ry="2.600" fill="#fff" />
            <ellipse cx="18.800" cy="20" rx="3.200" ry="2.600" fill="#fff" />
          </svg>
        </TaskApp>
        <TaskApp $line="#c3a98c">
          <svg width="29" height="27" viewBox="0 0 30 28">
            <path d="M8 1q0-1 1-1h20q1 0 1 1v6H8z" fill="#41a5ee" />
            <path d="M8 7h22v7H8z" fill="#2b7cd3" />
            <path d="M8 14h22v7H8z" fill="#185abd" />
            <path d="M8 21h22v6q0 1-1 1H9q-1 0-1-1z" fill="#103f91" />
            <rect y="6" width="15" height="15" rx="1.500" fill="#1a54b0" />
            <path d="m3 10 2.200 7.500L7.500 10.500l2.300 7L12 10" fill="none" stroke="#fff" strokeWidth="1.700" />
          </svg>
        </TaskApp>
        <TaskApp $line="#c3a98c">
          <FaWhatsapp size={33} color="#25d366" />
          <CountBadge>64</CountBadge>
        </TaskApp>
        <TaskApp $bg="#a55f28" $line="#ff7800"><CanvaDisc>Canva</CanvaDisc></TaskApp>
        <Tray>
          <TrayIcon $w={28}><Line s={16} vb="0 0 16 16" w={1.4}><path d="m1 12 7-7.500 7 7.500" /></Line></TrayIcon>
          <TrayIcon $w={33}>
            <Line s={20} w={1.2}><path d="M6 5.500h12.500v9H4V11M18.500 8.500h1v3h-1M1 4h4v2.500q0 1.500-2 1.500T1 6.500zM2 4V2M4 4V2M3 8v3" /><path d="M7 7.500h5v5H7z" fill="#fff" /></Line>
          </TrayIcon>
          <TrayIcon $w={27}>
            <Line s={16} vb="0 0 16 16" w={1.2}><path d="M1 15C1 7 7 1 15 1M4 15C4 9 9 4 15 4M7.500 15C7.500 11 11 7.500 15 7.500M11 15q0-4 4-4" /><circle cx="14" cy="14" r="1" fill="#fff" /></Line>
          </TrayIcon>
          <TrayIcon $w={34}>
            <Line s={21} w={1.2}><path d="M1 7.500h3L8 4v12l-4-3.500H1zM11 8q1.500 2 0 4M13.500 5.500q3.500 4.500 0 9M16 3q5.500 7 0 14" /></Line>
          </TrayIcon>
          <TrayIcon $w={29}>
            <Line s={17} w={1.3}><rect x="2" y="5" width="11" height="10" rx="1.500" /><path d="m13 9 4-2.500v7L13 11M5 2q5-2 9 0M5 18q5 2 9 0" /></Line>
          </TrayIcon>
          <TrayIcon $w={44}>ENG</TrayIcon>
          <Clock>11:36<br />15-06-2025</Clock>
          <Notice>
            <svg width="20" height="20" viewBox="0 0 20 20"><path d="M0 0h20v16h-9l-4 4v-4H0z" fill="#fff" /><path d="M4 4.500h12M4 8h12M4 11.500h8" stroke="#1c1c1c" strokeWidth="1.2" /></svg>
            <NoticeCount>2</NoticeCount>
          </Notice>
          <ShowDesktop />
        </Tray>
      </Taskbar>
    </Screen>
  );
}
